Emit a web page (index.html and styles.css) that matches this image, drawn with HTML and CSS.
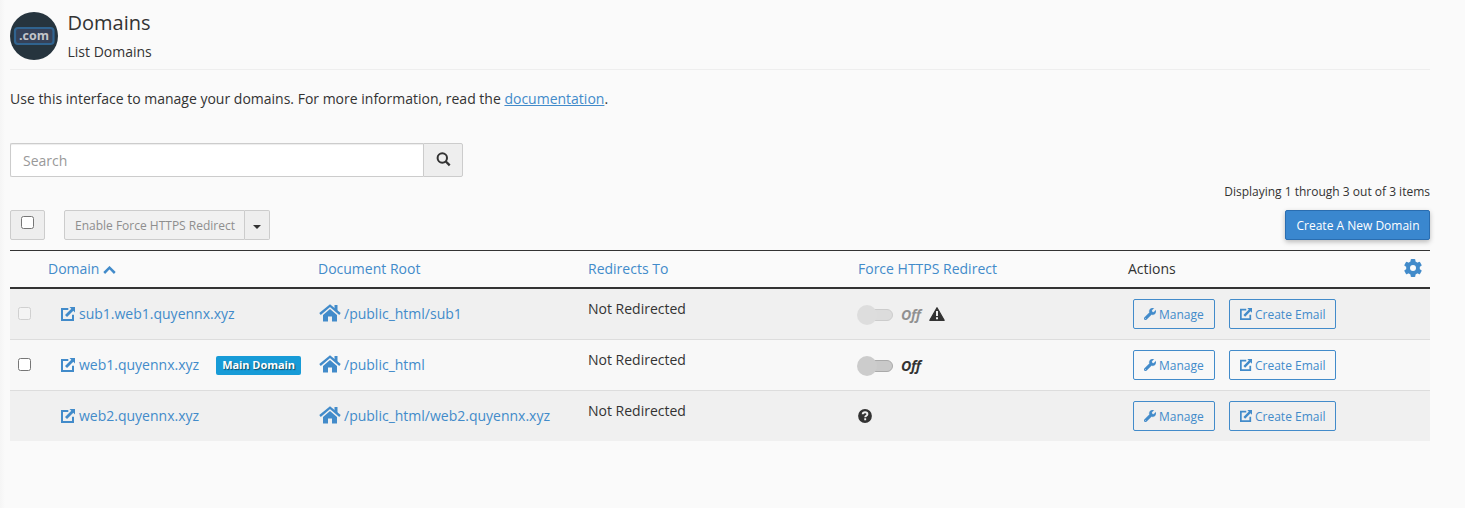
FILE: index.html
```html
<!DOCTYPE html>
<html lang="en">
<head>
<meta charset="utf-8">
<title>Domains</title>
<link rel="stylesheet" href="styles.css">
</head>
<body>
<svg class="defs" aria-hidden="true">
  <symbol id="ext" viewBox="0 0 14 14"><path d="M7.3 2H1v11h11V7.8" fill="none" stroke="currentColor" stroke-width="2"/><path d="M8.500 0H14v5.500l-1.700-1.700-6.300 6.300-2-2 6.300-6.300z" fill="currentColor"/></symbol>
  <symbol id="home" viewBox="0 0 22 18"><path d="M1 10 11 1.700 21 10" fill="none" stroke="currentColor" stroke-width="2.300"/><path d="M15.500 1H18.500v7l-3-2.500zM11 5.100l7 5.800V17.500h-5v-5H9v5H4v-6.600z" fill="currentColor"/></symbol>
  <symbol id="wrench" viewBox="0 0 512 512"><path fill="currentColor" stroke="currentColor" stroke-width="14" d="M507.730 109.100c-2.240-9.030-13.540-12.090-20.120-5.510l-74.360 74.360-67.880-11.310-11.310-67.880 74.360-74.360c6.620-6.620 3.430-17.900-5.660-20.160-47.380-11.740-99.550.91-136.580 37.930-39.640 39.640-50.550 97.100-34.050 147.200L18.740 402.760c-24.990 24.990-24.990 65.510 0 90.500 24.990 24.990 65.510 24.990 90.500 0l213.210-213.210c50.120 16.710 107.470 5.680 147.370-34.220 37.070-37.070 49.700-89.320 37.910-136.730zM64 472c-13.250 0-24-10.750-24-24 0-13.260 10.750-24 24-24s24 10.740 24 24c0 13.250-10.750 24-24 24z"/></symbol>
</svg>
<main class="page">
  <header class="head">
    <svg class="logo" viewBox="0 0 48 48"><circle cx="24" cy="24" r="24" fill="#26343e"/><rect x="5" y="16" width="38.500" height="16" rx="3" fill="#354158" stroke="#30638f" stroke-width="2.200"/><text x="24" y="27.500" text-anchor="middle" class="logo-text">.com</text></svg>
    <div class="titles">
      <h1>Domains</h1>
      <p>List Domains</p>
    </div>
  </header>
  <p class="intro">Use this interface to manage your domains. For more information, read the <a class="doc" href="#">documentation</a>.</p>
  <div class="search">
    <input type="text" placeholder="Search">
    <button class="search-btn" aria-label="Search"><svg width="15" height="15" viewBox="0 0 15 15"><circle cx="6.300" cy="6" r="4.700" fill="none" stroke="#333" stroke-width="2"/><path d="M9.600 9.300l4.100 4.100" stroke="#333" stroke-width="2.300"/></svg></button>
  </div>
  <div class="count">Displaying 1 through 3 out of 3 items</div>
  <div class="toolbar">
    <label class="check-all"><span class="box"></span></label>
    <div class="split"><button class="bulk">Enable Force HTTPS Redirect</button><button class="caret" aria-label="More"><svg width="8" height="4" viewBox="0 0 8 4"><path d="M0 0h8L4 4z" fill="#333"/></svg></button></div>
    <button class="primary">Create A New Domain</button>
  </div>
  <section class="table">
    <div class="row thead">
      <span></span>
      <a>Domain <svg class="sort" width="13" height="8" viewBox="0 0 13 8"><path d="M1.200 7l5.300-5.300L11.800 7" fill="none" stroke="currentColor" stroke-width="2.500"/></svg></a>
      <a>Document Root</a>
      <a>Redirects To</a>
      <a>Force HTTPS Redirect</a>
      <span class="actions-head">Actions
        <svg class="gear" width="18" height="18" viewBox="-9 -9 18 18"><g fill="#428bca"><rect x="-2.400" y="-9" width="4.800" height="18" rx="1"/><rect x="-2.400" y="-9" width="4.800" height="18" rx="1" transform="rotate(60)"/><rect x="-2.400" y="-9" width="4.800" height="18" rx="1" transform="rotate(120)"/><circle r="6.900"/></g><circle r="3" fill="#fafafa"/></svg>
      </span>
    </div>
    <div class="row odd">
      <span class="pick"><span class="box off"></span></span>
      <a class="domain"><svg class="ext"><use href="#ext"/></svg>sub1.web1.quyennx.xyz</a>
      <a class="root"><svg class="home"><use href="#home"/></svg>/public_html/sub1</a>
      <span class="redirect">Not Redirected</span>
      <span class="force"><span class="toggle faded"><i class="switch"></i><em>Off</em></span><svg class="warn" width="16" height="14" viewBox="0 0 16 14"><path d="M8 .7 15.200 13.300H.8z" fill="#333" stroke="#333" stroke-width="1.200" stroke-linejoin="round"/><path d="M8 4v5M8 10.200v2" stroke="#f0f0f0" stroke-width="2"/></svg></span>
      <span class="actions"><button class="btn"><svg><use href="#wrench"/></svg>Manage</button><button class="btn"><svg><use href="#ext"/></svg>Create Email</button></span>
    </div>
    <div class="row">
      <span class="pick"><span class="box"></span></span>
      <a class="domain"><svg class="ext"><use href="#ext"/></svg>web1.quyennx.xyz<b class="badge">Main Domain</b></a>
      <a class="root"><svg class="home"><use href="#home"/></svg>/public_html</a>
      <span class="redirect">Not Redirected</span>
      <span class="force"><span class="toggle"><i class="switch"></i><em>Off</em></span></span>
      <span class="actions"><button class="btn"><svg><use href="#wrench"/></svg>Manage</button><button class="btn"><svg><use href="#ext"/></svg>Create Email</button></span>
    </div>
    <div class="row odd">
      <span class="pick"></span>
      <a class="domain"><svg class="ext"><use href="#ext"/></svg>web2.quyennx.xyz</a>
      <a class="root"><svg class="home"><use href="#home"/></svg>/public_html/web2.quyennx.xyz</a>
      <span class="redirect">Not Redirected</span>
      <span class="force"><svg class="help" width="14" height="14" viewBox="0 0 14 14"><circle cx="7" cy="7" r="6.900" fill="#333"/><path d="M4.700 5.300C4.800 3.900 5.900 3.300 7.100 3.300c1.200 0 2.300.7 2.300 1.900C9.400 6.800 7.200 6.700 7.200 8.300M7.200 9.300v2" fill="none" stroke="#f0f0f0" stroke-width="1.900"/></svg></span>
      <span class="actions"><button class="btn"><svg><use href="#wrench"/></svg>Manage</button><button class="btn"><svg><use href="#ext"/></svg>Create Email</button></span>
    </div>
  </section>
</main>
</body>
</html>
```
FILE: styles.css
```css
* { box-sizing: border-box; }
body {
  margin: 0;
  min-height: 508px;
  background: linear-gradient(to right, #f5f5f5, #fafafa 5px);
  color: #333;
  font: 14px/20px "Open Sans", sans-serif;
}
button, input { font-family: inherit; margin: 0; }
.defs { display: none; }
.page { width: 1430px; padding: 12px 0 0 10px; }
a { color: #428bca; }
h1, p { margin: 0; font-weight: 400; }

.head { display: flex; gap: 9.500px; height: 58px; border-bottom: 1px solid #eee; }
.logo { width: 48px; height: 48px; }
.logo-text { font: 700 12.500px "Open Sans", sans-serif; fill: #c3c5c9; }
.titles h1 { font-size: 20px; line-height: 22px; }
.titles p { margin-top: 8px; }
.intro { margin-top: 19px; }
.doc { text-decoration: underline; }

.search { display: flex; width: 453px; height: 34px; margin-top: 34px; }
.search input {
  width: 413px;
  padding: 0 12px;
  border: 1px solid #ccc;
  border-right: 0;
  border-radius: 2px 0 0 2px;
  background: #fff;
  box-shadow: inset 0 1px 1px rgba(0, 0, 0, .075);
  font-size: 14px;
}
.search input::placeholder { color: #999; opacity: 1; }
.search-btn {
  width: 40px;
  padding: 0 0 2px;
  display: flex;
  align-items: center;
  justify-content: center;
  border: 1px solid #ccc;
  border-radius: 0 2px 2px 0;
  background: #eee;
}

.count { margin-top: 6px; text-align: right; font-size: 12px; line-height: 18px; }
.toolbar { display: flex; height: 30px; margin-top: 9px; }
.check-all {
  width: 35px;
  padding: 5px 0 0 10px;
  border: 1px solid #ccc;
  border-radius: 2px;
  background: #eee;
}
.box {
  display: block;
  width: 13px;
  height: 13px;
  border: 1px solid #767676;
  border-radius: 2.500px;
  background: #fff;
}
.box.off { border-color: #d0d0d0; background: #f4f4f4; }
.split { display: flex; margin-left: 19px; }
.bulk {
  width: 181px;
  padding: 0 0 0 1px;
  border: 1px solid #ccc;
  border-radius: 2px 0 0 2px;
  background: #f1f1f1;
  color: #8e8e8e;
  font-size: 12px;
}
.caret {
  display: flex;
  align-items: center;
  justify-content: center;
  width: 25px;
  padding: 3px 0 0;
  border: 1px solid #ccc;
  border-left: 0;
  border-radius: 0 2px 2px 0;
  background: #eee;
}
.primary {
  width: 145px;
  margin-left: auto;
  padding: 0 0 0 1px;
  border: 1px solid #2a6db0;
  border-radius: 2px;
  background: #3a87cf;
  box-shadow: 0 2px 5px rgba(0, 0, 0, .26);
  color: #fff;
  font-size: 12px;
}

.table { margin-top: 10px; border-top: 1px solid #333; }
.row {
  display: grid;
  grid-template-columns: 38px 270px 270px 270px 270px 302px;
  align-items: center;
  height: 51px;
  border-bottom: 1px solid #ddd;
  background: #f8f8f8;
}
.row.thead { height: 38px; border-bottom: 2px solid #333; background: none; }
.row.odd { background: #f0f0f0; }
.row:last-child { height: 50px; border-bottom: 0; }
.actions-head { display: flex; justify-content: space-between; align-items: center; padding-right: 8px; }
.gear { margin-top: -2px; }
.pick { padding: 0 0 2px 8px; }
.domain, .root { display: flex; align-items: center; }
.domain { padding-left: 13px; }
.ext { width: 14px; height: 14px; margin-right: 4px; }
.home { width: 22px; height: 18px; margin: -3px 3px 0 1px; }
.badge {
  margin-left: 17px;
  width: 85px;
  text-align: center;
  border-radius: 2px;
  background: #179bd7;
  color: #fff;
  font-size: 11px;
  letter-spacing: -.05px;
  line-height: 17px;
  padding-bottom: 2px;
  text-shadow: 1px 1px 1px rgba(0, 0, 0, .5);
}
.redirect { align-self: start; margin-top: 10px; }
.force { display: flex; align-items: center; }
.toggle { display: flex; align-items: center; margin-top: 2px; }
.faded { opacity: .5; }
.switch {
  position: relative;
  width: 35px;
  height: 12px;
  border: 1px solid #aaa;
  border-radius: 6px;
  background: #c9c9c9;
}
.switch::before {
  content: "";
  position: absolute;
  left: -2px;
  top: -5px;
  width: 20px;
  height: 20px;
  border-radius: 50%;
  background: #ccc;
}
.toggle em { width: 21px; margin-left: 8px; font-weight: 700; letter-spacing: -.3px; }
.warn { margin-left: 7px; }
.actions { display: flex; gap: 14px; padding-left: 5px; }
.btn {
  display: flex;
  align-items: center;
  height: 30px;
  padding: 0 9px 0 10px;
  border: 1px solid #428bca;
  border-radius: 2px;
  background: transparent;
  color: #428bca;
  font-size: 12px;
}
.btn:first-child { width: 82px; }
.btn:last-child { width: 107px; }
.btn svg { width: 12px; height: 12px; margin-right: 3px; }
```
